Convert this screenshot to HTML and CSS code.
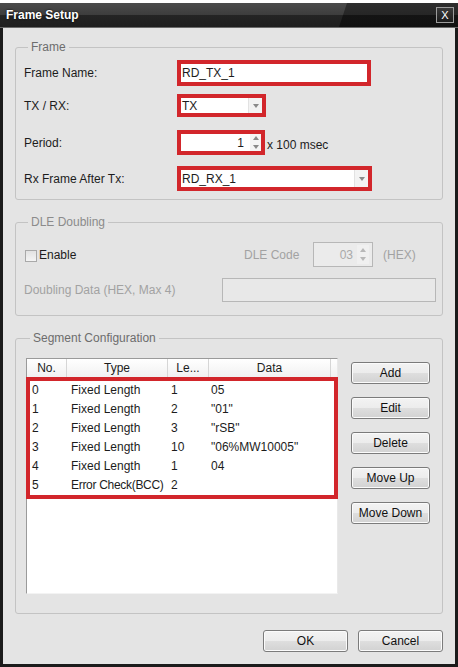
FILE: index.html
```html
<!DOCTYPE html>
<html lang="en">
  <head>
    <meta charset="UTF-8" />
    <title>Frame Setup</title>
    <link rel="stylesheet" href="styles.css">
  </head>
  <body>
    <div class="window">
      <div class="titlebar">
        <span class="title">Frame Setup</span>
        <span class="close">X</span>
      </div>

      <div class="content">
        <!-- frame settings -->
        <fieldset class="group group-frame">
          <legend>Frame</legend>
          <div class="field field-name">
            <label>Frame Name:</label>
            <div class="hl hl-name"><span>RD_TX_1</span></div>
          </div>
          <div class="field field-mode">
            <label>TX / RX:</label>
            <div class="hl hl-mode">
              <span>TX</span>
              <span class="drop"><i class="arrow-down"></i></span>
            </div>
          </div>
          <div class="field field-period">
            <label>Period:</label>
            <div class="hl hl-period">
              <span class="num">1</span>
              <span class="spin"><i class="arrow-up"></i><i class="arrow-down"></i></span>
            </div>
            <span class="unit">x 100 msec</span>
          </div>
          <div class="field field-rx">
            <label>Rx Frame After Tx:</label>
            <div class="hl hl-rx">
              <span>RD_RX_1</span>
              <span class="drop"><i class="arrow-down"></i></span>
            </div>
          </div>
        </fieldset>

        <!-- DLE doubling, disabled -->
        <fieldset class="group group-dle">
          <legend>DLE Doubling</legend>
          <div class="dle-row">
            <span class="check-label"><i class="checkbox"></i>Enable</span>
            <span class="dim dle-code">DLE Code</span>
            <div class="spin-box">
              <span class="num">03</span>
              <span class="spin"><i class="arrow-up"></i><i class="arrow-down"></i></span>
            </div>
            <span class="dim hex">(HEX)</span>
          </div>
          <div class="dle-row dle-data">
            <span class="dim data-label">Doubling Data (HEX, Max 4)</span>
            <div class="text-box"></div>
          </div>
        </fieldset>

        <!-- segments -->
        <fieldset class="group group-seg">
          <legend>Segment Configuration</legend>
          <div class="seg-body">
            <div class="list">
              <div class="list-head">
                <span class="c1">No.</span>
                <span class="c2">Type</span>
                <span class="c3">Le...</span>
                <span class="c4">Data</span>
                <span class="c5"></span>
              </div>
              <div class="rows">
                <div class="row"><span class="c1">0</span><span class="c2">Fixed Length</span><span class="c3">1</span><span class="c4">05</span></div>
                <div class="row"><span class="c1">1</span><span class="c2">Fixed Length</span><span class="c3">2</span><span class="c4">"01"</span></div>
                <div class="row"><span class="c1">2</span><span class="c2">Fixed Length</span><span class="c3">3</span><span class="c4">"rSB"</span></div>
                <div class="row"><span class="c1">3</span><span class="c2">Fixed Length</span><span class="c3">10</span><span class="c4">"06%MW10005"</span></div>
                <div class="row"><span class="c1">4</span><span class="c2">Fixed Length</span><span class="c3">1</span><span class="c4">04</span></div>
                <div class="row"><span class="c1">5</span><span class="c2 tight">Error Check(BCC)</span><span class="c3">2</span><span class="c4"></span></div>
              </div>
            </div>
            <div class="side-buttons">
              <button class="btn">Add</button>
              <button class="btn">Edit</button>
              <button class="btn">Delete</button>
              <button class="btn">Move Up</button>
              <button class="btn">Move Down</button>
            </div>
          </div>
        </fieldset>

        <div class="footer">
          <button class="btn btn-wide">OK</button>
          <button class="btn btn-wide">Cancel</button>
        </div>
      </div>
    </div>
  </body>
</html>
```

FILE: styles.css
```css
/* dialog styles */
body {
  margin: 0;
  background: #ffffff;
  font-family: "Liberation Sans", Arial, sans-serif;
  font-size: 12px;
  color: #1c1c1c;
}

.window {
  width: 458px;
  height: 664px;
  margin-top: 3px;
  padding: 0 3px 3px;
  box-sizing: border-box;
  background: #1b1b1b;
  display: flex;
  flex-direction: column;
}

.titlebar {
  position: relative;
  height: 25px;
  margin: 0 -3px;
  padding: 0 4px 0 6px;
  display: flex;
  align-items: center;
  justify-content: space-between;
  background: linear-gradient(#2e2e2e, #262626 50%, #141414 52%, #111111);
  border-bottom: 1px solid #6a6a6a;
  box-sizing: border-box;
  overflow: hidden;
}

/* glossy part on the left of the title bar */
.titlebar::before {
  content: "";
  position: absolute;
  left: 0;
  top: 0;
  bottom: 0;
  width: 347px;
  background: linear-gradient(#4b4b4b, #3d3d3d 50%, #242424 52%, #1f1f1f);
  clip-path: polygon(0 0, 347px 0, 339px 100%, 0 100%);
}

.title {
  position: relative;
  color: #ffffff;
  font-weight: bold;
  font-size: 12px;
  text-shadow: 0 0 2px #000;
}

.close {
  position: relative;
  width: 18px;
  height: 16px;
  box-sizing: border-box;
  border: 1px solid #9c9c9c;
  background: linear-gradient(#3a3a3a, #1c1c1c);
  color: #ffffff;
  font-size: 11px;
  line-height: 14px;
  text-align: center;
}

.content {
  flex: 1;
  background: #e4e4e4;
  padding: 12px 12px 0;
  display: flex;
  flex-direction: column;
}

.group {
  margin: 0;
  border: 1px solid #c3c3c3;
  border-radius: 3px;
  min-width: 0;
}

.group legend {
  padding: 0 3px;
  margin-left: 4px;
  line-height: 14px;
  color: #6d6d6d;
}

.group-frame {
  padding: 6px 8px 8px;
}

.field {
  display: flex;
  align-items: center;
}

.field label {
  width: 153px;
}

.field-name { height: 26px; }
.field-mode { height: 23px; margin-top: 8px; }
.field-period { height: 25px; margin-top: 13px; }
.field-rx { height: 25px; margin-top: 11px; }

/* red highlight around the controls */
.hl {
  height: 100%;
  box-sizing: border-box;
  border: 4px solid #d2262b;
  background: #ffffff;
  display: flex;
  align-items: center;
  padding-left: 1px;
}

.hl-name { width: 194px; }
.hl-mode { width: 89px; }
.hl-period { width: 88px; }
.hl-rx { width: 195px; }

.drop {
  margin-left: auto;
  width: 13px;
  align-self: stretch;
  border-left: 1px solid #e2e2e2;
  background: #f3f3f3;
  display: flex;
  align-items: center;
  justify-content: center;
}

.arrow-down,
.arrow-up {
  display: block;
  width: 0;
  height: 0;
  border-left: 3px solid transparent;
  border-right: 3px solid transparent;
}

.arrow-down { border-top: 4px solid #8a8a8a; }
.arrow-up { border-bottom: 4px solid #8a8a8a; }

.num {
  margin-left: auto;
}

.spin {
  width: 11px;
  align-self: stretch;
  margin-left: 6px;
  display: flex;
  flex-direction: column;
  align-items: center;
  justify-content: space-around;
  background: #f5f5f5;
}

.unit {
  margin-left: 2px;
  margin-top: 4px;
}

.group-dle {
  margin-top: 15px;
  padding: 13px 6px 13px 8px;
}

.group-dle legend {
  color: #8b8b8b;
}

.dle-row {
  display: flex;
  align-items: center;
  height: 25px;
}

.dim {
  color: #a2a2a2;
}

.check-label {
  width: 220px;
  display: flex;
  align-items: center;
  color: #1c1c1c;
}

.checkbox {
  width: 12px;
  height: 12px;
  box-sizing: border-box;
  margin: 2px 2px 0 1px;
  border: 1px solid #a9a9a9;
  background: linear-gradient(#e2e2e2, #f4f4f4);
}

.dle-code {
  width: 69px;
}

.spin-box {
  width: 60px;
  height: 25px;
  box-sizing: border-box;
  border: 1px solid #b7b7b7;
  background: #ebebeb;
  display: flex;
  align-items: center;
  color: #a9a9a9;
  padding-right: 3px;
}

.spin-box .spin {
  width: 12px;
  margin: 2px 0 2px 4px;
  background: #f0f0f0;
}

.spin-box .arrow-down { border-top-color: #b8b8b8; }
.spin-box .arrow-up { border-bottom-color: #b8b8b8; }

.hex {
  margin-left: 10px;
}

.dle-data {
  height: 24px;
  margin-top: 11px;
}

.data-label {
  width: 198px;
}

.text-box {
  width: 214px;
  height: 24px;
  box-sizing: border-box;
  border: 1px solid #b7b7b7;
  background: #e8e8e8;
}

.group-seg {
  margin-top: 15px;
  padding: 13px 8px 19px 10px;
}

.seg-body {
  display: flex;
  gap: 13px;
}

.list {
  width: 312px;
  height: 236px;
  box-sizing: border-box;
  border: 1px solid;
  border-color: #9a9a9a #e9e9e9 #f3f3f3 #9a9a9a;
  background: #ffffff;
}

.list-head {
  display: flex;
  height: 18px;
  line-height: 18px;
  border-bottom: 1px solid #dadada;
  background: linear-gradient(#ffffff, #f1f1f1);
}

.list-head span {
  text-align: center;
  border-right: 1px solid #d6d6d6;
}

.list-head .c1 { width: 39px; }
.list-head .c2 { width: 100px; }
.list-head .c3 { width: 40px; }
.list-head .c4 { width: 121px; }
.list-head .c5 { flex: 1; border-right: none; }

.rows {
  margin: -1px -1px 0;
  border: 4px solid #d2262b;
}

.row {
  display: flex;
  height: 19px;
  line-height: 19px;
  white-space: nowrap;
}

.row .c1 { width: 34px; padding-left: 2px; }
.row .c2 { width: 95px; padding-left: 5px; }
.row .c3 { width: 35px; padding-left: 5px; }
.row .c4 { flex: 1; padding-left: 5px; }

.tight {
  letter-spacing: -0.3px;
}

.side-buttons {
  margin-top: 4px;
  display: flex;
  flex-direction: column;
  gap: 13px;
}

.btn {
  width: 79px;
  height: 22px;
  padding: 0;
  border: 1px solid #7b7b7b;
  border-radius: 3px;
  background: linear-gradient(#f3f3f3, #ececec 50%, #dedede 52%, #d2d2d2);
  box-shadow: inset 0 0 0 1px #fbfbfb;
  font-family: "Liberation Sans", Arial, sans-serif;
  font-size: 12px;
  color: #111111;
}

.footer {
  margin-top: 16px;
  display: flex;
  justify-content: flex-end;
  gap: 10px;
}

.btn-wide {
  width: 85px;
}
```
